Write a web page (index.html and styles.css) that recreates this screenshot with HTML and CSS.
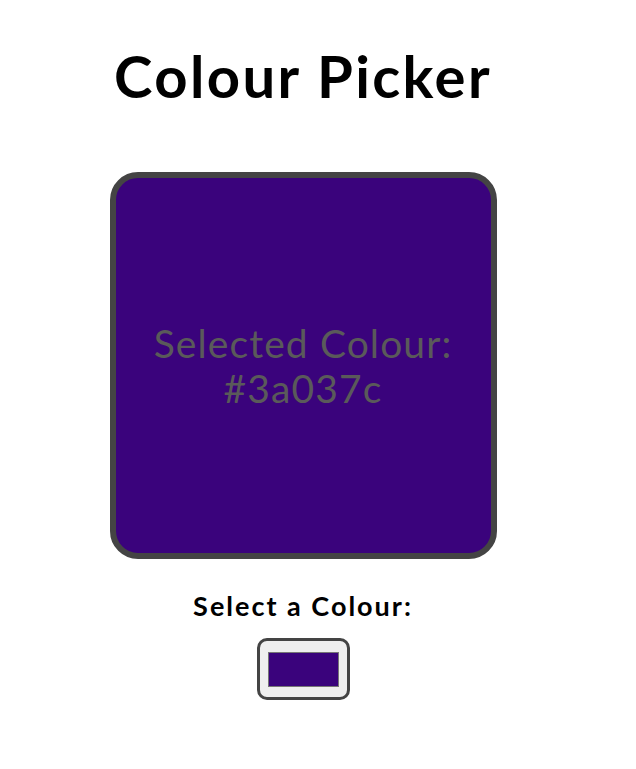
FILE: index.html
```html
<!DOCTYPE html>
<html>
<head>
<meta charset="utf-8">
<link rel="stylesheet" href="styles.css">
</head>
<body>
<main class="app">
  <h1 class="title">Colour Picker</h1>
  <div class="preview" style="background-color:#3a037c">
    <p class="preview-text">Selected Colour:<br>#3a037c</p>
  </div>
  <label class="picker-label" for="picker">Select a Colour:</label>
  <div class="picker">
    <span class="swatch" style="background-color:#3a037c"></span>
  </div>
</main>
</body>
</html>
```

FILE: styles.css
```css
html, body {
  margin: 0;
  background: #ffffff;
}
.app {
  width: 606px;
  display: flex;
  flex-direction: column;
  align-items: center;
  font-family: "Lato", "DejaVu Sans", sans-serif;
}
.title {
  margin: 36px 0 0 0;
  font-size: 58px;
  line-height: 80px;
  font-weight: 700;
  letter-spacing: 2.4px;
  color: #000;
}
.preview {
  margin-top: 56px;
  box-sizing: border-box;
  width: 387px;
  height: 387px;
  border: 6px solid #444444;
  border-radius: 28px;
  display: flex;
  align-items: center;
  justify-content: center;
}
.preview-text {
  margin: 0;
  text-align: center;
  color: #5a5a5a;
  font-size: 39px;
  line-height: 45px;
  letter-spacing: 1.1px;
}
.picker-label {
  margin-top: 27px;
  font-size: 27px;
  line-height: 40px;
  font-weight: 700;
  letter-spacing: 2px;
  color: #000;
}
.picker {
  margin-top: 12px;
  box-sizing: border-box;
  width: 93px;
  height: 62px;
  border: 3px solid #444444;
  border-radius: 10px;
  background: #efefef;
  display: flex;
  align-items: center;
  justify-content: center;
}
.swatch {
  box-sizing: border-box;
  width: 71px;
  height: 35px;
  border: 1px solid #777777;
}
```
